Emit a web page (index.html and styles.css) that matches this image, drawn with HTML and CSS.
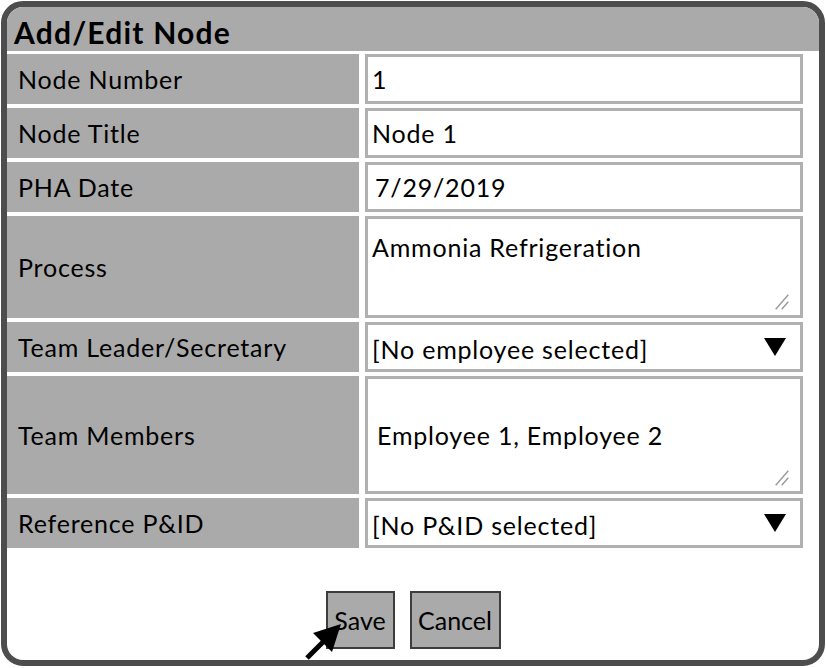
FILE: index.html
```html
<!DOCTYPE html>
<html>
<head>
<meta charset="utf-8">
<link rel="stylesheet" href="styles.css">
</head>
<body>
<div class="window">
  <div class="titlebar">Add/Edit Node</div>
  <div class="form">
    <div class="label">Node Number</div>
    <div class="field"><input class="input" type="text" value="1"></div>
    <div class="label">Node Title</div>
    <div class="field"><input class="input" type="text" value="Node 1"></div>
    <div class="label">PHA Date</div>
    <div class="field"><input class="input date" type="text" value="7/29/2019"></div>
    <div class="label">Process</div>
    <div class="field">
      <textarea class="input area">Ammonia Refrigeration</textarea>
      <svg class="grip" width="14" height="16" viewBox="0 0 14 16"><line x1="0.7" y1="15.3" x2="13.3" y2="0.7" stroke="#9a9a9a" stroke-width="1.4"/><line x1="6.7" y1="15.3" x2="13.3" y2="7.7" stroke="#9a9a9a" stroke-width="1.4"/></svg>
    </div>
    <div class="label">Team Leader/Secretary</div>
    <div class="field">
      <select class="input select"><option>[No employee selected]</option></select>
      <svg class="caret" width="22" height="18" viewBox="0 0 22 18"><polygon points="0,0 22,0 11,18" fill="#000"/></svg>
    </div>
    <div class="label">Team Members</div>
    <div class="field">
      <textarea class="input area members">Employee 1, Employee 2</textarea>
      <svg class="grip" width="14" height="16" viewBox="0 0 14 16"><line x1="0.7" y1="15.3" x2="13.3" y2="0.7" stroke="#9a9a9a" stroke-width="1.4"/><line x1="6.7" y1="15.3" x2="13.3" y2="7.7" stroke="#9a9a9a" stroke-width="1.4"/></svg>
    </div>
    <div class="label">Reference P&amp;ID</div>
    <div class="field">
      <select class="input select"><option>[No P&amp;ID selected]</option></select>
      <svg class="caret" width="22" height="18" viewBox="0 0 22 18"><polygon points="0,0 22,0 11,18" fill="#000"/></svg>
    </div>
  </div>
  <div class="buttons">
    <button class="btn btn-save">Save</button>
    <button class="btn btn-cancel">Cancel</button>
  </div>
  <svg class="cursor" width="60" height="50" viewBox="0 0 60 50">
    <line x1="6" y1="48" x2="22" y2="32" stroke="#000" stroke-width="5"/>
    <polygon points="40,14 12,23 31,42" fill="#000"/>
  </svg>
</div>
</body>
</html>
```

FILE: styles.css
```css
html, body {
  margin: 0;
  padding: 0;
  background: #fff;
}

body {
  font-family: Lato, "Noto Sans", sans-serif;
  color: #000;
}

.window {
  position: relative;
  margin: 1px;
  width: 824px;
  height: 665px;
  box-sizing: border-box;
  border: 6px solid #4d4d4d;
  border-radius: 22px;
  overflow: hidden;
  background: #fff;
}

.titlebar {
  height: 44px;
  box-sizing: border-box;
  background: #aaaaaa;
  padding: 8px 0 0 7px;
  font-size: 30px;
  font-weight: 700;
  letter-spacing: 1.2px;
  line-height: 34px;
}

.form {
  margin-top: 3px;
  display: grid;
  grid-template-columns: 352px 438px;
  grid-template-rows: 50px 50px 50px 102px 50px 118px 50px;
  column-gap: 6px;
  row-gap: 4px;
}

.label {
  background: #aaaaaa;
  display: flex;
  align-items: center;
  padding-left: 11px;
  font-size: 25px;
  letter-spacing: 0.8px;
}

.field {
  position: relative;
}

.input {
  display: block;
  width: 100%;
  height: 100%;
  box-sizing: border-box;
  margin: 0;
  border: 3px solid #b0b0b0;
  border-radius: 0;
  background: #fff;
  padding: 0 4px;
  font-family: inherit;
  font-size: 25px;
  letter-spacing: 0.8px;
  color: #000;
  outline: none;
}

.date {
  padding-left: 7px;
}

.area {
  padding: 13px 4px 0 4px;
  line-height: 30px;
  resize: none;
  overflow: hidden;
}

.members {
  padding: 41px 9px 0 9px;
}

.select {
  -webkit-appearance: none;
  appearance: none;
  padding: 4px 4px 0 4px;
}

.caret {
  position: absolute;
  right: 17px;
  top: 16px;
}

.grip {
  position: absolute;
  right: 14px;
  bottom: 8px;
}

.buttons {
  margin-top: 43px;
  display: flex;
  justify-content: center;
  gap: 15px;
}

.btn {
  height: 58px;
  box-sizing: border-box;
  border: 2px solid #3d3d3d;
  border-radius: 0;
  background: #aaaaaa;
  padding: 0;
  font-family: inherit;
  font-size: 25px;
  color: #000;
}

.btn-save {
  width: 69px;
}

.btn-cancel {
  width: 91px;
}

.cursor {
  position: absolute;
  left: 294px;
  top: 603px;
}
```
